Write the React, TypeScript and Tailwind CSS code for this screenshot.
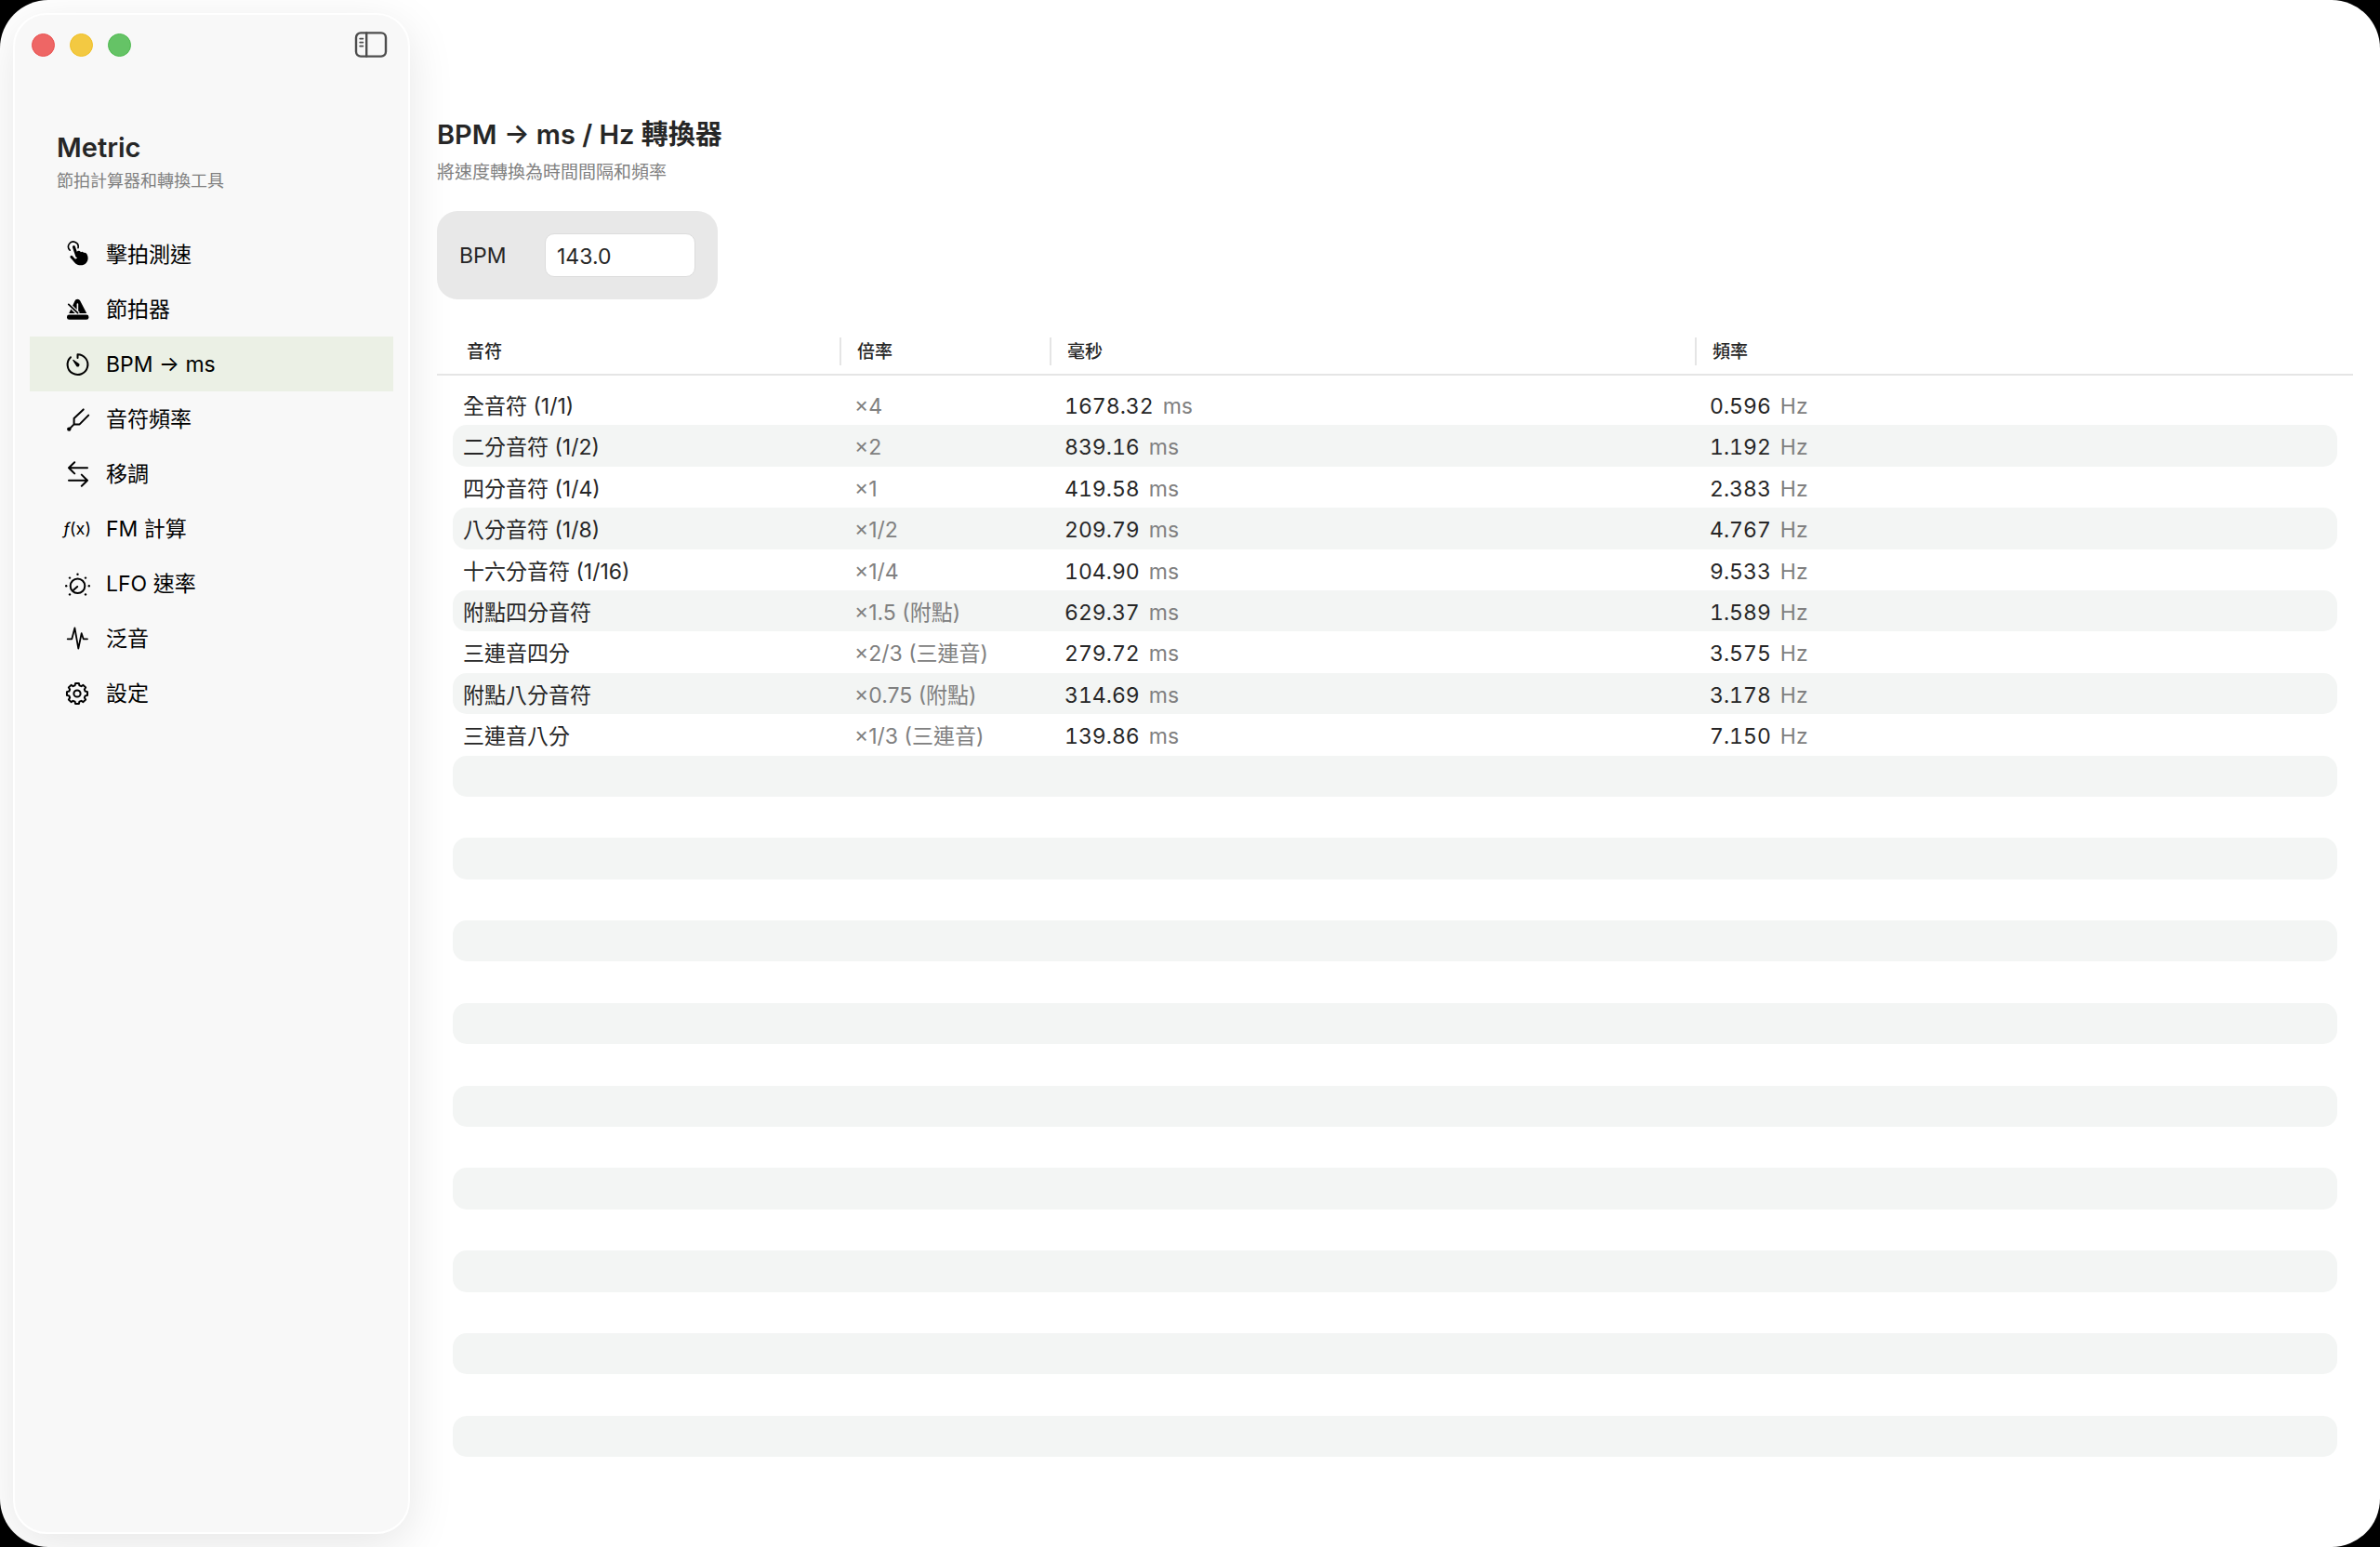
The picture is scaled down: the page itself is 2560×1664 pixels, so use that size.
import React, { useState } from 'react';

const NAV_ITEMS = [
  { id: 'tap', label: '擊拍測速' },
  { id: 'metronome', label: '節拍器' },
  { id: 'bpm', label: 'BPM → ms' },
  { id: 'pitch', label: '音符頻率' },
  { id: 'transpose', label: '移調' },
  { id: 'fm', label: 'FM 計算' },
  { id: 'lfo', label: 'LFO 速率' },
  { id: 'harmonics', label: '泛音' },
  { id: 'settings', label: '設定' },
];

const NOTES = [
  { name: '全音符 (1/1)', label: '×4', factor: 4 },
  { name: '二分音符 (1/2)', label: '×2', factor: 2 },
  { name: '四分音符 (1/4)', label: '×1', factor: 1 },
  { name: '八分音符 (1/8)', label: '×1/2', factor: 1 / 2 },
  { name: '十六分音符 (1/16)', label: '×1/4', factor: 1 / 4 },
  { name: '附點四分音符', label: '×1.5 (附點)', factor: 1.5 },
  { name: '三連音四分', label: '×2/3 (三連音)', factor: 2 / 3 },
  { name: '附點八分音符', label: '×0.75 (附點)', factor: 0.75 },
  { name: '三連音八分', label: '×1/3 (三連音)', factor: 1 / 3 },
];

const EMPTY_ROWS = 17;

// Outline of an eight-toothed gear around (15, 15)
const gearPath = () => {
  const points: string[] = [];
  for (let i = 0; i < 8; i++) {
    const mid = (i * Math.PI) / 4;
    [
      [-0.27, 9],
      [-0.17, 11.2],
      [0.17, 11.2],
      [0.27, 9],
    ].forEach(([offset, radius]) => {
      const x = 15 + radius * Math.sin(mid + offset);
      const y = 15 - radius * Math.cos(mid + offset);
      points.push(`${x.toFixed(2)} ${y.toFixed(2)}`);
    });
  }
  return `M${points.join('L')}Z`;
};

const NavIcon: React.FC<{ id: string }> = ({ id }) => {
  if (id === 'fm') {
    return (
      <span aria-hidden="true" className="w-[30px] shrink-0 text-[18px] leading-none whitespace-nowrap">
        <i>ƒ</i>(x)
      </span>
    );
  }

  return (
    <svg
      aria-hidden="true"
      viewBox="0 0 30 30"
      className="size-[30px] shrink-0"
      fill="none"
      stroke="currentColor"
      strokeWidth="2"
      strokeLinecap="round"
      strokeLinejoin="round"
    >
      {id === 'tap' && (
        <>
          <path d="M7.2 10.2A5.3 5.3 0 1 1 16 7.6" strokeWidth="1.6" />
          <path d="M11.4 6.6L14.8 16.4" strokeWidth="3" />
          <path d="M8.8 17.2L14 23" strokeWidth="2.8" />
          <path
            d="M14 12.6Q15.2 10.6 17 10.8Q18.4 11 18.9 12.2Q20.6 11 22 12.8Q24.6 12.2 25.6 14.4C27.2 18 27 21 24.8 23.8C22 27 16.6 27 13.8 24.8L10.6 21.2L15 18.4Z"
            fill="currentColor"
            stroke="none"
          />
        </>
      )}
      {id === 'metronome' && (
        <>
          <path d="M6.2 19L12.6 5.4Q13.2 3.7 15.3 3.7Q17.4 3.7 18.2 5.4L25.2 19Z" fill="currentColor" stroke="none" />
          <path d="M15.4 9V16" className="stroke-[#f8f8f8]" strokeWidth="1.6" />
          <path d="M5.6 9.2L16.4 19.6" className="stroke-[#f8f8f8]" strokeWidth="4.2" strokeLinecap="butt" />
          <path d="M5.8 9.4L15.6 18.6" strokeWidth="1.8" />
          <rect x="4" y="20.4" width="23.4" height="5.4" rx="2.4" fill="currentColor" stroke="none" />
        </>
      )}
      {id === 'bpm' && (
        <>
          <path d="M15.5 8V4.2A10.9 10.9 0 1 1 8 7.2" />
          <path d="M10.8 10.4L16.8 14.8A1.5 1.5 0 0 1 14.8 16.8Z" fill="currentColor" strokeWidth="1.2" />
        </>
      )}
      {id === 'pitch' && (
        <>
          <path d="M21.7 4.4L11.6 13.9V20.4H17.6L27.2 10.6M11.6 20.4L6.4 25.6" />
          <circle cx="6.3" cy="25.6" r="2.2" fill="currentColor" stroke="none" />
        </>
      )}
      {id === 'transpose' && (
        <path d="M26 8.3H6M12.2 2.2L6 8.3L12.2 14.4M6 21.7H26M19.8 15.6L26 21.7L19.8 27.8" />
      )}
      {id === 'lfo' && (
        <>
          <circle cx="15.5" cy="17.2" r="7.8" />
          <path d="M11.2 21.6L15.2 18" />
          {[
            [15.5, 4.8],
            [7, 8.6],
            [24, 8.6],
            [3.2, 17.2],
            [27.8, 17.2],
            [7, 26.4],
            [24, 26.4],
          ].map(([cx, cy]) => (
            <circle key={`${cx}-${cy}`} cx={cx} cy={cy} r="1.2" fill="currentColor" stroke="none" />
          ))}
        </>
      )}
      {id === 'harmonics' && <path d="M4.7 15.3H9.3L12.4 3.4L16.3 25.6L19.7 9.2L21.7 15.3H26" strokeWidth="1.8" />}
      {id === 'settings' && (
        <>
          <path d={gearPath()} />
          <circle cx="15" cy="15" r="3.6" />
        </>
      )}
    </svg>
  );
};

const Sidebar: React.FC<{ active: string; onSelect: (id: string) => void }> = ({ active, onSelect }) => (
  <aside className="w-[427px] shrink-0 my-[14px] ml-[14px] rounded-[36px] border-2 border-white bg-[#f8f8f8] shadow-[0_12px_50px_rgba(0,0,0,0.1)]">
    <div className="flex items-center justify-between pt-4 pl-[18px] pr-[22px]">
      <div className="flex gap-4">
        <button aria-label="關閉" className="size-[25px] rounded-full bg-[#ee6665] border border-[#e9504f]" />
        <button aria-label="縮到最小" className="size-[25px] rounded-full bg-[#f3c942] border border-[#efbf24]" />
        <button aria-label="縮放" className="size-[25px] rounded-full bg-[#65c366] border border-[#4eb94f]" />
      </div>
      <button aria-label="切換側邊欄" className="text-[#4d4d4d]">
        <svg viewBox="0 0 36 32" className="w-9 h-8" fill="none" stroke="currentColor" strokeWidth="2.4" strokeLinecap="round">
          <rect x="2" y="3.4" width="32" height="25.2" rx="5" />
          <path d="M13.2 3.4V28.6" />
          <path d="M6.2 9.6H9.4M6.2 13.6H9.4M6.2 17.6H9.4" strokeWidth="1.8" />
        </svg>
      </button>
    </div>

    <div className="pt-[75px] pl-[45px]">
      <h1 className="text-[29px] leading-10 font-semibold text-[#262626]">Metric</h1>
      <p className="text-[18px] leading-8 text-[#808080]">節拍計算器和轉換工具</p>
    </div>

    <nav className="mt-[33px] px-4">
      {NAV_ITEMS.map((item) => (
        <button
          key={item.id}
          type="button"
          onClick={() => onSelect(item.id)}
          className={`w-full h-[59px] pl-9 flex items-center gap-4 text-left text-[23px] text-black ${active === item.id ? 'bg-[#ebf0e5]' : ''}`}
        >
          <NavIcon id={item.id} />
          <span className="pt-0.5">{item.label}</span>
        </button>
      ))}
    </nav>
  </aside>
);

export default function App() {
  const [active, setActive] = useState('bpm');
  const [bpm, setBpm] = useState('143.0');

  const beat = 60000 / (parseFloat(bpm) || 120);

  return (
    <div className="min-h-screen bg-black">
      <div className="min-h-screen flex rounded-[52px] overflow-hidden bg-white text-[#262626] font-['Inter','Noto_Sans_CJK_TC',sans-serif]">
        <Sidebar active={active} onSelect={setActive} />

        <main className="relative flex-1 flex flex-col pt-[125px] px-[29px] pb-[97px]">
          <h2 className="text-[29px] leading-10 font-semibold">BPM → ms / Hz 轉換器</h2>
          <p className="mt-[7px] text-[19px] leading-7 text-[#808080]">將速度轉換為時間間隔和頻率</p>

          <div className="mt-[27px] self-start h-[95px] px-6 flex items-center rounded-[22px] bg-[#e8e8e8]">
            <label htmlFor="bpm" className="w-[92px] pt-0.5 text-[23px]">
              BPM
            </label>
            <input
              id="bpm"
              type="text"
              value={bpm}
              onChange={(e) => setBpm(e.target.value)}
              className="w-[162px] h-[47px] pl-3 pt-0.5 rounded-[10px] border border-[#dcdcdc] bg-white text-[23px] outline-none"
            />
          </div>

          <table className="mt-[30px] flex-1 flex flex-col text-left">
            <thead className="block border-b-2 border-[#e5e5e5]">
              <tr className="grid grid-cols-[433px_226px_694px_1fr] pt-[11px] pb-[9px] text-[19px] leading-[29px]">
                <th className="pl-8 pt-px font-medium">音符</th>
                <th className="pl-[17px] pt-px font-medium border-l-2 border-[#e5e5e5]">倍率</th>
                <th className="pl-[17px] pt-px font-medium border-l-2 border-[#e5e5e5]">毫秒</th>
                <th className="pl-[17px] pt-px font-medium border-l-2 border-[#e5e5e5]">頻率</th>
              </tr>
            </thead>
            <tbody className="flex-1 flex flex-col pt-[9px] px-[17px] text-[23px]">
              {NOTES.map((note) => (
                <tr
                  key={note.name}
                  className="flex-1 grid grid-cols-[416px_226px_694px_1fr] items-center pt-1 rounded-[15px] even:bg-[#f3f5f4]"
                >
                  <td className="pl-[11px]">{note.name}</td>
                  <td className="pl-4 text-[#808080]">{note.label}</td>
                  <td className="pl-4 flex gap-2.5">
                    <span className="tabular-nums">{(beat * note.factor).toFixed(2)}</span>
                    <span className="text-[#808080]">ms</span>
                  </td>
                  <td className="pl-4 flex gap-2.5">
                    <span className="tabular-nums">{(1000 / (beat * note.factor)).toFixed(3)}</span>
                    <span className="text-[#808080]">Hz</span>
                  </td>
                </tr>
              ))}
              {Array.from({ length: EMPTY_ROWS }, (_, i) => (
                <tr key={i} className="flex-1 grid pt-1 rounded-[15px] even:bg-[#f3f5f4]">
                  <td />
                </tr>
              ))}
            </tbody>
          </table>
        </main>
      </div>
    </div>
  );
}
